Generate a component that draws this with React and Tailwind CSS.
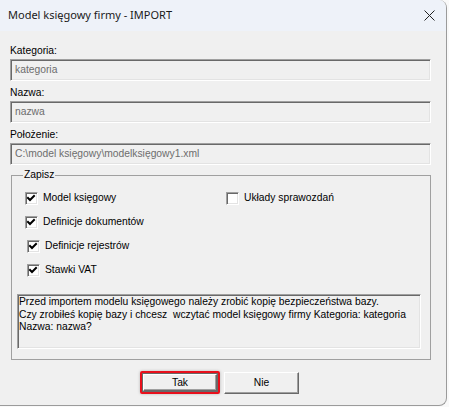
import React from 'react';

const sunken =
  'border border-t-[#a0a0a0] border-l-[#a0a0a0] border-r-white border-b-white shadow-[inset_1px_1px_0_#696969,inset_-1px_-1px_0_#e3e3e3]';

const Field = ({ label, value }) => (
  <div>
    <div className="h-[20px] flex items-end pb-[3px] leading-none">{label}</div>
    <div className={`h-[22px] flex items-center pl-[4px] text-[#6d6d6d] ${sunken}`}>{value}</div>
  </div>
);

const CheckBox = ({ checked }) => (
  <div className={`w-[13px] h-[13px] bg-white ${sunken}`}>
    {checked && (
      <svg width="11" height="11" viewBox="0 0 11 11" className="block">
        <path d="M2 5 L4 7 L8 3" stroke="#000" strokeWidth="2" fill="none" strokeLinecap="square" />
      </svg>
    )}
  </div>
);

const CheckRow = ({ label, checked, offset }) => (
  <div className={`h-[24px] flex items-center gap-[5px] ${offset ? 'pl-[2px]' : ''}`}>
    <CheckBox checked={checked} />
    <span>{label}</span>
  </div>
);

const Button = ({ children, focused }) => {
  const inner = (
    <div className="w-full h-full flex items-center justify-center border border-t-white border-l-white border-r-[#696969] border-b-[#696969] shadow-[inset_-1px_-1px_0_#a0a0a0]">
      {children}
    </div>
  );
  if (focused) {
    return (
      <div className="w-[80px] h-[23px] border-2 border-[#e8101c] rounded-[2px] shadow-[0_0_3px_rgba(0,0,0,0.25)]">
        <div className="w-full h-full border border-[#696969]">{inner}</div>
      </div>
    );
  }
  return <div className="w-[75px] h-[22px]">{inner}</div>;
};

export default function App() {
  return (
    <div className="w-[449px] h-[407px] bg-[#f9f9f9]">
      <div
        className="w-[447px] h-[406px] bg-[#f0f0f0] border-r border-b border-[#9b9b9b] rounded-tr-lg rounded-br-lg overflow-hidden flex flex-col text-[10.3px] text-black"
        style={{ fontFamily: '"Liberation Sans", Arial, sans-serif' }}
      >
        {/* Title bar */}
        <div className="h-[31px] shrink-0 bg-[#eef2f9] flex items-center justify-between pl-[8px] pr-[11px]">
          <span className="text-[11px] text-[#1a1a1a]" style={{ fontFamily: '"Noto Sans", sans-serif' }}>
            Model księgowy firmy - IMPORT
          </span>
          <svg width="11" height="11" viewBox="0 0 11 11">
            <path d="M0.5 0.5 L10.5 10.5 M10.5 0.5 L0.5 10.5" stroke="#222" strokeWidth="1" />
          </svg>
        </div>

        {/* Body */}
        <div className="pl-[10px] pr-[15px] pt-[8px]">
          <Field label="Kategoria:" value="kategoria" />
          <Field label="Nazwa:" value="nazwa" />
          <Field label="Położenie:" value="C:\model księgowy\modelksięgowy1.xml" />

          <fieldset className="mt-[4px] ml-[1px] border border-[#a0a0a0] pl-[5px] pr-[9px] pb-[10px]">
            <legend className="ml-[6px] px-[1px] leading-[12px]">Zapisz</legend>
            <div className="flex pl-[8px] pt-[5px]">
              <div className="w-[201px]">
                <CheckRow label="Model księgowy" checked />
                <CheckRow label="Definicje dokumentów" checked />
                <CheckRow label="Definicje rejestrów" checked offset />
                <CheckRow label="Stawki VAT" checked offset />
              </div>
              <div>
                <CheckRow label="Układy sprawozdań" />
              </div>
            </div>
            <div className={`mt-[12px] h-[55px] pl-[1px] pt-[1px] leading-[12.5px] ${sunken}`}>
              <div className="whitespace-pre">Przed importem modelu księgowego należy zrobić kopię bezpieczeństwa bazy.</div>
              <div className="whitespace-pre">Czy zrobiłeś kopię bazy i chcesz  wczytać model księgowy firmy Kategoria: kategoria</div>
              <div className="whitespace-pre">Nazwa: nazwa?</div>
            </div>
          </fieldset>

          <div className="mt-[11px] flex items-start gap-[4px] pl-[130px]">
            <Button focused>Tak</Button>
            <div className="mt-[1px]">
              <Button>Nie</Button>
            </div>
          </div>
        </div>
      </div>
    </div>
  );
}
